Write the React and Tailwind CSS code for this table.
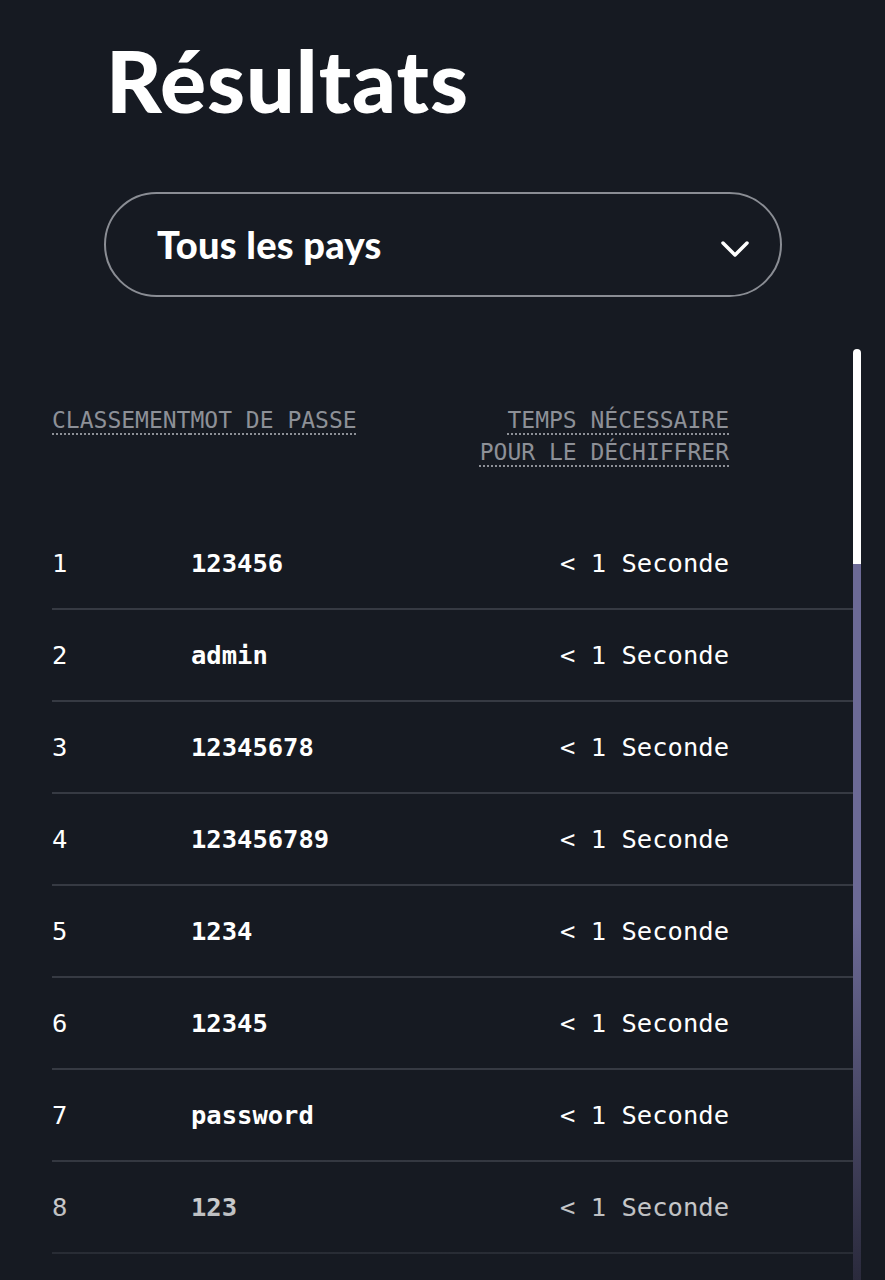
import React from "react";

const rows = [
  ["1", "123456"],
  ["2", "admin"],
  ["3", "12345678"],
  ["4", "123456789"],
  ["5", "1234"],
  ["6", "12345"],
  ["7", "password"],
  ["8", "123"],
];

export default function App() {
  return (
    <div className="h-[1280px] overflow-hidden bg-[#161a22] text-white">
      <div className="pl-[104px] pr-[103px] pt-[30px]">
        <h1 className="pl-[2px] text-[86px] font-black leading-[100px] tracking-[1px]" style={{ fontFamily: "Lato, sans-serif" }}>
          Résultats
        </h1>
        <button className="mt-[62px] flex h-[105px] w-full items-center justify-between rounded-full border-2 border-[#8a8d94] pl-[51px] pr-[30px]">
          <span className="text-[38px] font-black tracking-[0.3px]" style={{ fontFamily: "Lato, sans-serif" }}>Tous les pays</span>
          <svg className="mt-[8px]" width="30" height="20" viewBox="0 0 30 20" fill="none">
            <path d="M3 4 L15 16 L27 4" stroke="white" strokeWidth="3.5" strokeLinecap="round" strokeLinejoin="round" />
          </svg>
        </button>
      </div>
      <div className="mt-[52px] flex pl-[52px] pr-[24px]">
        <div className="relative flex-1" style={{ fontFamily: "'DejaVu Sans Mono', monospace" }}>
          <div className="grid grid-cols-[139px_1fr_auto] pr-[124px] pt-[55px] text-[23px] leading-[32px] text-[#8d9097]">
            <div className="col-span-2">
              <span className="underline decoration-dotted decoration-2 underline-offset-[5px]">CLASSEMENT</span>
              <span className="underline decoration-dotted decoration-2 underline-offset-[5px]">MOT DE PASSE</span>
            </div>
            <div className="text-right">
              <span className="underline decoration-dotted decoration-2 underline-offset-[5px]">TEMPS NÉCESSAIRE<br />POUR LE DÉCHIFFRER</span>
            </div>
          </div>
          <div className="mt-[50px] pb-[40px]">
            {rows.map(([n, p]) => (
              <div key={n} className="grid h-[92px] grid-cols-[139px_1fr_auto] items-center border-b-2 border-[#363a43] pr-[124px] text-[25.5px]">
                <div>{n}</div>
                <div className="font-bold">{p}</div>
                <div className="text-right">&lt; 1 Seconde</div>
              </div>
            ))}
          </div>
          <div className="pointer-events-none absolute bottom-0 left-0 right-0 h-[150px] bg-gradient-to-b from-transparent to-[#161a22]/60" />
        </div>
        <div className="flex w-[8px] flex-col">
          <div className="h-[215px] rounded-t-full bg-white" />
          <div className="h-[716px] bg-gradient-to-b from-[#6c6a96] via-[#6c6a96] to-[#2a2a3c]" />
        </div>
      </div>
    </div>
  );
}
